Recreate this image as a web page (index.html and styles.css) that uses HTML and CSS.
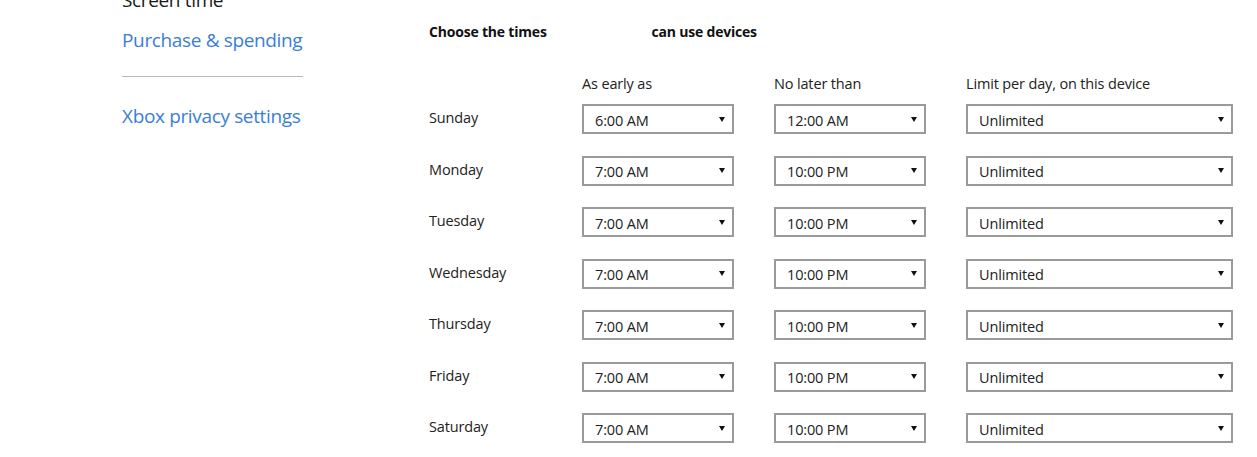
FILE: index.html
```html
<!DOCTYPE html>
<html lang="en">
<head>
<meta charset="utf-8">
<title>Screen time</title>
<link rel="stylesheet" href="styles.css">
</head>
<body>
<div class="page">
  <nav class="sidebar">
    <a class="nav-item nav-current">Screen time</a>
    <a class="nav-item nav-link nav-purchase">Purchase &amp; spending</a>
    <hr class="divider">
    <a class="nav-item nav-link nav-xbox">Xbox privacy settings</a>
  </nav>
  <main class="main">
    <h2 class="heading">Choose the times <span class="name-gap"></span> can use devices</h2>
    <div class="schedule schedule-head">
      <div></div>
      <div class="col-head">As early as</div>
      <div class="col-head">No later than</div>
      <div class="col-head">Limit per day, on this device</div>
    </div>
    <div class="schedule schedule-body">
      <div class="day">Sunday</div>
      <div class="select"><span>6:00 AM</span><i class="arrow"></i></div>
      <div class="select"><span>12:00 AM</span><i class="arrow"></i></div>
      <div class="select wide"><span>Unlimited</span><i class="arrow"></i></div>

      <div class="day">Monday</div>
      <div class="select"><span>7:00 AM</span><i class="arrow"></i></div>
      <div class="select"><span>10:00 PM</span><i class="arrow"></i></div>
      <div class="select wide"><span>Unlimited</span><i class="arrow"></i></div>

      <div class="day">Tuesday</div>
      <div class="select"><span>7:00 AM</span><i class="arrow"></i></div>
      <div class="select"><span>10:00 PM</span><i class="arrow"></i></div>
      <div class="select wide"><span>Unlimited</span><i class="arrow"></i></div>

      <div class="day">Wednesday</div>
      <div class="select"><span>7:00 AM</span><i class="arrow"></i></div>
      <div class="select"><span>10:00 PM</span><i class="arrow"></i></div>
      <div class="select wide"><span>Unlimited</span><i class="arrow"></i></div>

      <div class="day">Thursday</div>
      <div class="select"><span>7:00 AM</span><i class="arrow"></i></div>
      <div class="select"><span>10:00 PM</span><i class="arrow"></i></div>
      <div class="select wide"><span>Unlimited</span><i class="arrow"></i></div>

      <div class="day">Friday</div>
      <div class="select"><span>7:00 AM</span><i class="arrow"></i></div>
      <div class="select"><span>10:00 PM</span><i class="arrow"></i></div>
      <div class="select wide"><span>Unlimited</span><i class="arrow"></i></div>

      <div class="day">Saturday</div>
      <div class="select"><span>7:00 AM</span><i class="arrow"></i></div>
      <div class="select"><span>10:00 PM</span><i class="arrow"></i></div>
      <div class="select wide"><span>Unlimited</span><i class="arrow"></i></div>
    </div>
  </main>
</div>
</body>
</html>
```

FILE: styles.css
```css
html, body {
  margin: 0;
  padding: 0;
  background: #fff;
}

body {
  font-family: "Open Sans", "Noto Sans", sans-serif;
  color: #1f1f1f;
  overflow: hidden;
}

.page {
  display: flex;
  align-items: flex-start;
}

.sidebar {
  margin-left: 122px;
  width: 181px;
  display: flex;
  flex-direction: column;
  margin-top: -14px;
}

.nav-item {
  font-size: 19px;
  line-height: 28px;
  letter-spacing: -0.35px;
  white-space: nowrap;
  text-decoration: none;
}

.nav-current {
  color: #1a1a1a;
}

.nav-link {
  color: #3a7ed8;
}

.nav-purchase {
  margin-top: 12px;
}

.divider {
  border: 0;
  border-top: 1px solid #b9b9b9;
  margin: 22px 0 0;
  width: 181px;
}

.nav-xbox {
  margin-top: 25px;
}

.main {
  margin-left: 126px;
  padding-top: 22px;
}

.heading {
  margin: 0;
  font-size: 14px;
  line-height: 20px;
  font-weight: 700;
  letter-spacing: -0.2px;
  color: #111;
}

.name-gap {
  display: inline-block;
  width: 98px;
}

.schedule {
  display: grid;
  grid-template-columns: 153px 192px 192px 267px;
  align-items: center;
}

.schedule-head {
  margin-top: 32px;
}

.schedule-body {
  margin-top: 10px;
  grid-auto-rows: 30px;
  row-gap: 21.5px;
}

.col-head {
  font-size: 14.5px;
  line-height: 20px;
  letter-spacing: -0.15px;
  color: #222;
  white-space: nowrap;
}

.day {
  font-size: 14.5px;
  line-height: 20px;
  letter-spacing: -0.15px;
  color: #222;
  margin-top: -2px;
}

.select {
  box-sizing: border-box;
  width: 152px;
  height: 30px;
  border: 2px solid #9a9a9a;
  display: flex;
  align-items: center;
  justify-content: space-between;
  padding: 2px 7px 0 11px;
  font-size: 14.5px;
  letter-spacing: -0.15px;
  color: #222;
}

.select.wide {
  width: 267px;
}

.arrow {
  width: 0;
  height: 0;
  border-left: 3px solid transparent;
  border-right: 3px solid transparent;
  border-top: 5px solid #111;
  margin-top: -2px;
}
```
